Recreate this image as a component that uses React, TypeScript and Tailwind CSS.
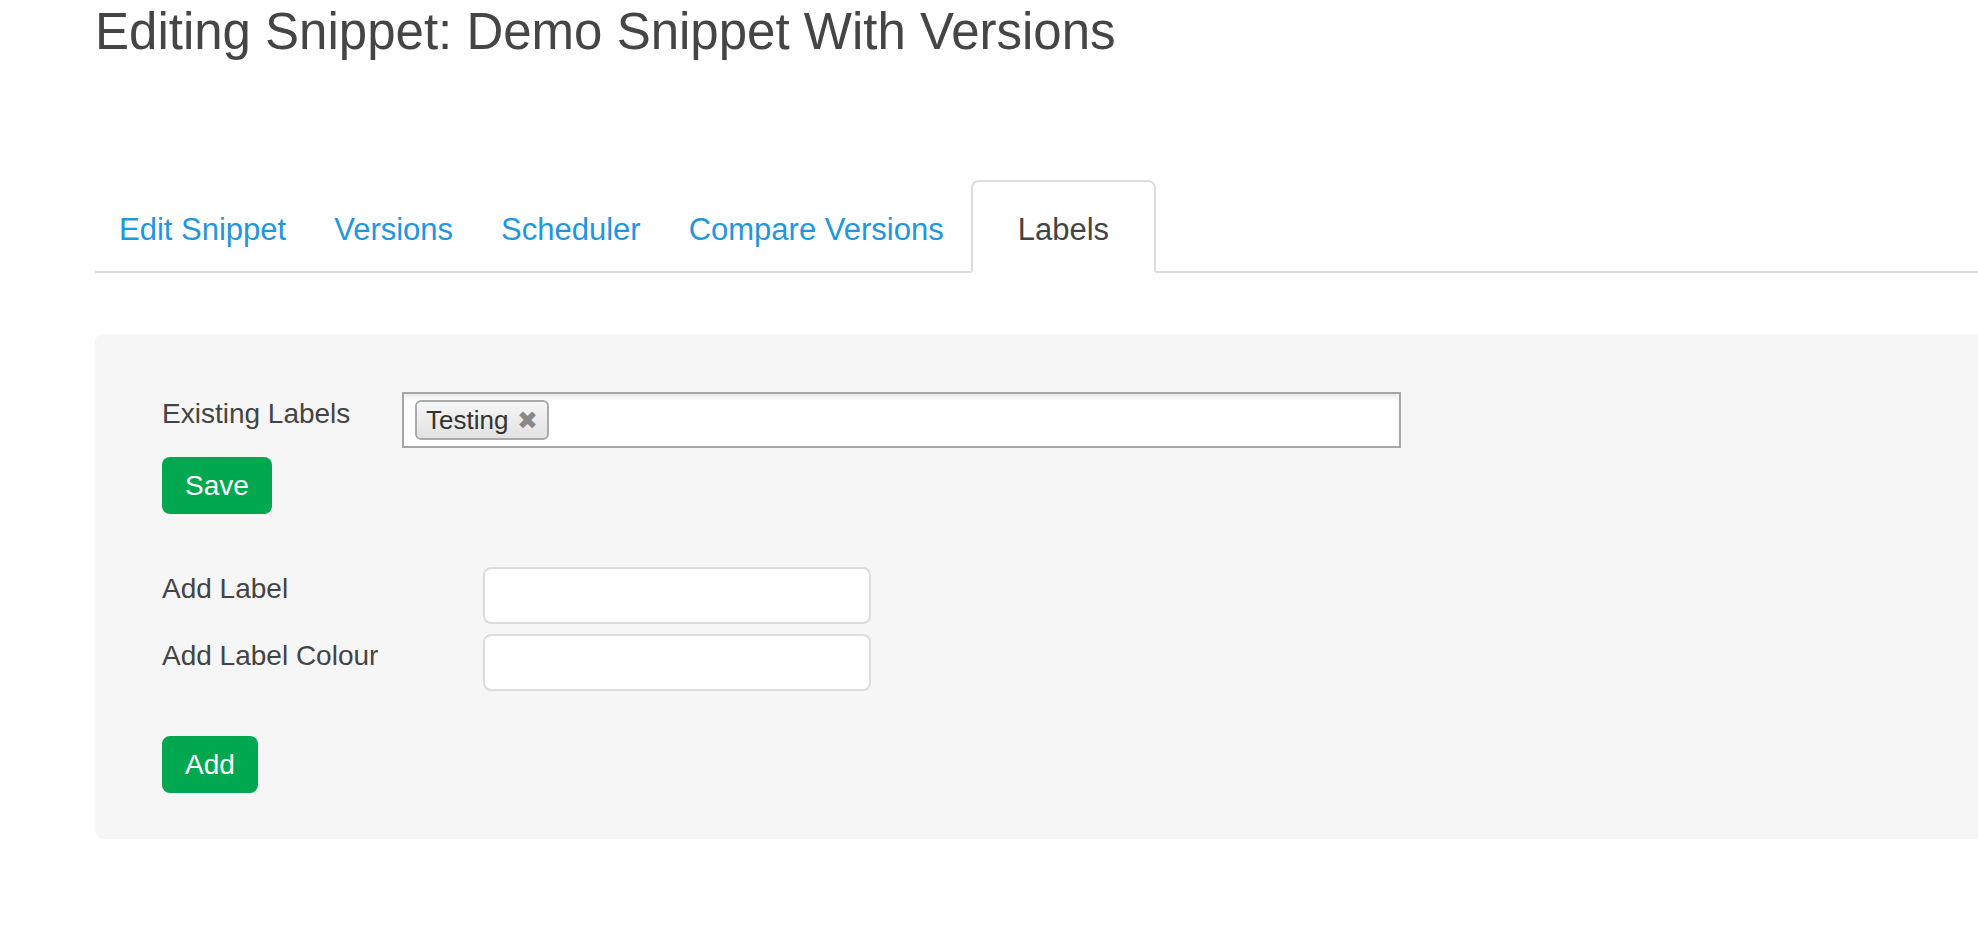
import React from 'react';

const tabs = ['Edit Snippet', 'Versions', 'Scheduler', 'Compare Versions'];

// kleine helper voor de grijze invoervelden
const TextField: React.FC = () => (
  <input
    type="text"
    className="w-[388px] h-[57px] bg-white border-2 border-[#dcdcdc] rounded-[8px] outline-none"
  />
);

const GreenButton: React.FC<{ label: string }> = ({ label }) => (
  <button className="h-[57px] px-[23px] bg-[#02a84f] rounded-[8px] text-white text-[28px] leading-none font-normal">
    {label}
  </button>
);

export default function App() {
  return (
    <div
      className="w-full min-h-screen bg-white overflow-hidden pl-[95px] text-[#444]"
      style={{ fontFamily: '"Liberation Sans", Arial, sans-serif' }}
    >
      <h1 className="text-[51px] leading-[64px] font-normal text-[#454545] m-0">
        Editing Snippet: Demo Snippet With Versions
      </h1>

      {/* Tabs */}
      <ul className="mt-[116px] flex border-b-2 border-[#ddd]">
        {tabs.map(t => (
          <li key={t} className="-mb-[2px]">
            <a className="block px-[22px] pt-[31px] pb-[24px] text-[31px] leading-[34px] text-[#1f96e0] border-2 border-transparent cursor-pointer">
              {t}
            </a>
          </li>
        ))}
        <li className="-mb-[2px] ml-[3px]">
          <a className="block px-[45px] pt-[31px] pb-[24px] text-[31px] leading-[34px] text-[#444] bg-white border-2 border-[#ddd] border-b-white rounded-t-[8px]">
            Labels
          </a>
        </li>
      </ul>

      {/* Panel */}
      <div className="mt-[61px] bg-[#f6f6f6] rounded-l-[8px] pl-[67px] pt-[58px] pb-[46px]">
        <div className="flex items-start">
          <label className="w-[240px] pt-[2px] text-[28px] leading-[40px]">Existing Labels</label>
          <div className="w-[999px] h-[56px] bg-white border-2 border-[#a6a6a6] shadow-[inset_0_7px_6px_-5px_rgba(0,0,0,0.12)] pl-[11px] pt-[6px]">
            <span className="inline-flex items-center h-[40px] pl-[9px] pr-[9px] gap-[9px] border-2 border-[#aaa] rounded-[6px] bg-gradient-to-b from-[#f6f6f6] to-[#e2e2e2] text-[26px] text-[#333]">
              Testing
              <span className="text-[25px] text-[#888] leading-none">✖</span>
            </span>
          </div>
        </div>
        <div className="mt-[9px]">
          <GreenButton label="Save" />
        </div>

        <div className="mt-[53px] flex flex-col gap-[10px]">
          <div className="flex items-start">
            <label className="w-[321px] pt-[2px] text-[28px] leading-[40px]">Add Label</label>
            <TextField />
          </div>
          <div className="flex items-start">
            <label className="w-[321px] pt-[2px] text-[28px] leading-[40px]">Add Label Colour</label>
            <TextField />
          </div>
        </div>
        <div className="mt-[45px]">
          <GreenButton label="Add" />
        </div>
      </div>
    </div>
  );
}
